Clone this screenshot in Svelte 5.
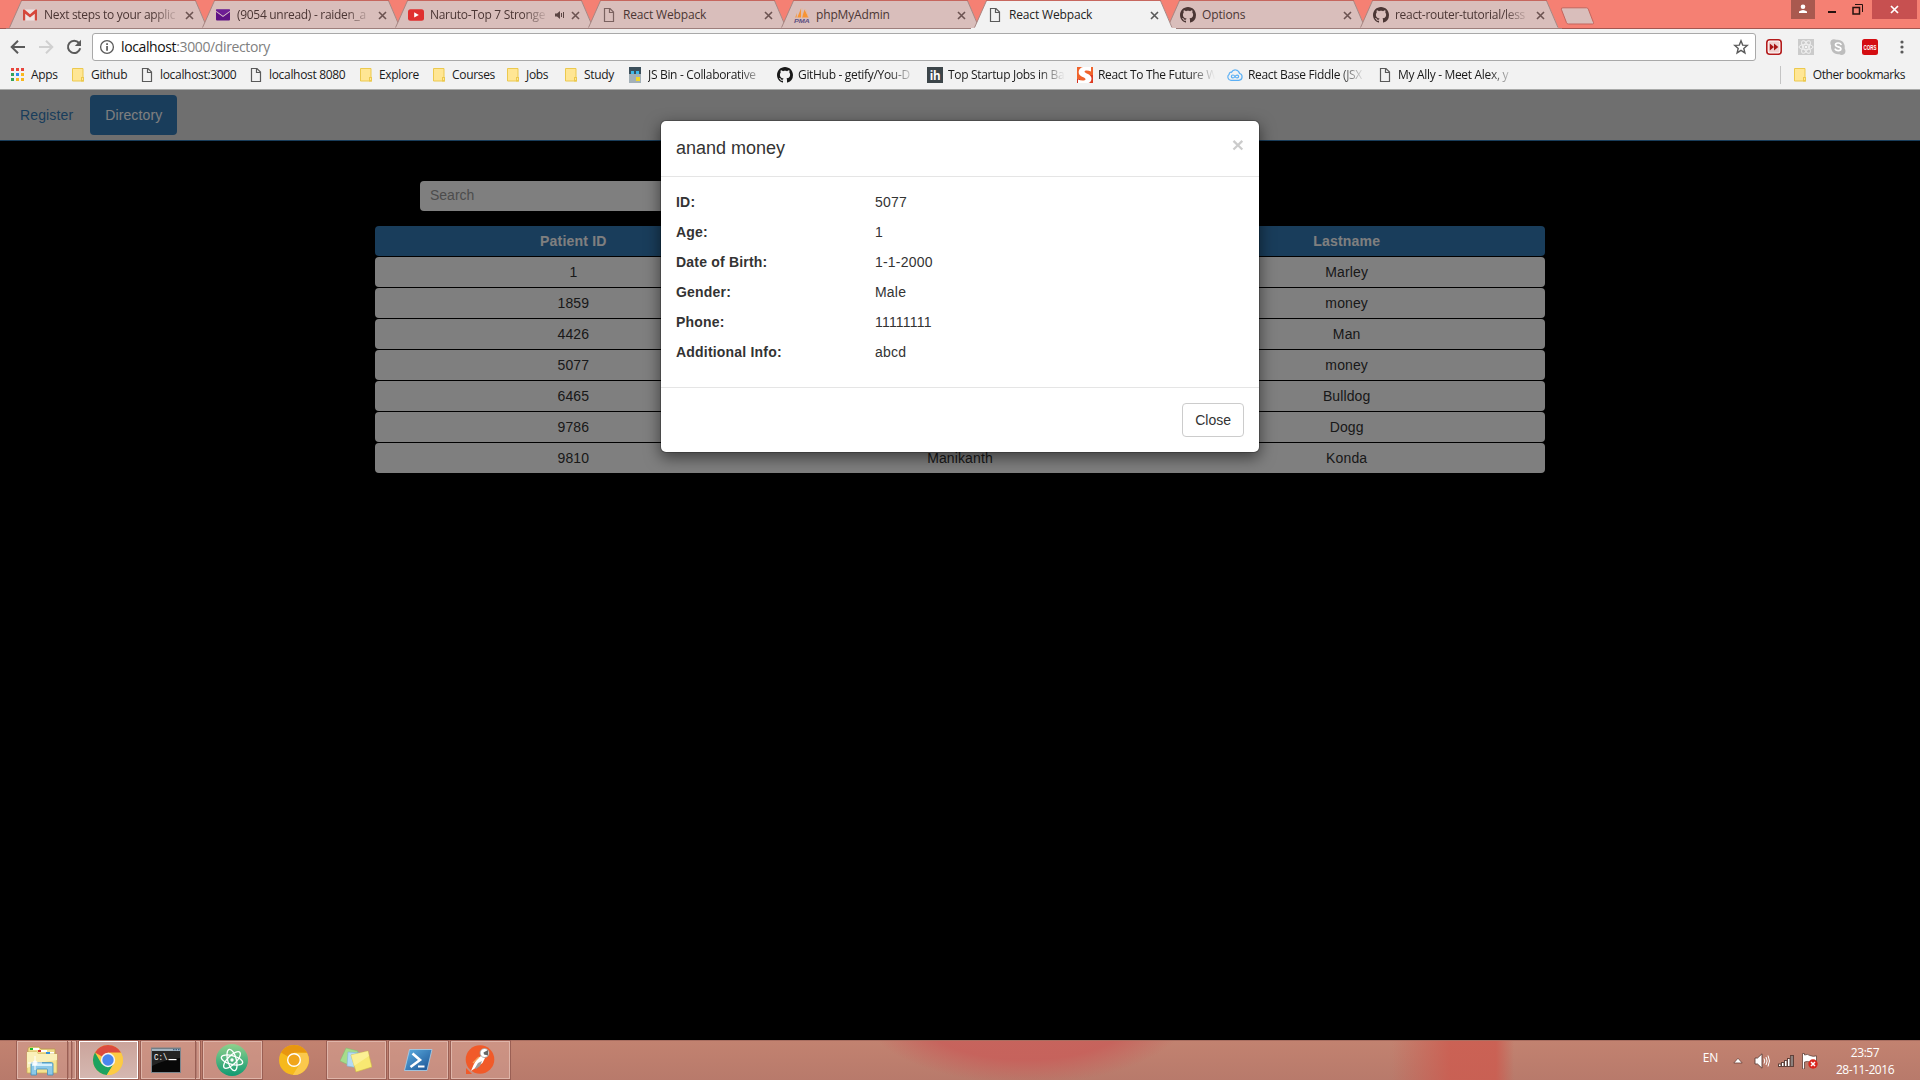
<script>
  const tabs = [
    { icon: 'gmail', title: 'Next steps to your applic', fade: true },
    { icon: 'ymail', title: '(9054 unread) - raiden_a', fade: true },
    { icon: 'youtube', title: 'Naruto-Top 7 Stronge', fade: true, audio: true },
    { icon: 'page', title: 'React Webpack' },
    { icon: 'pma', title: 'phpMyAdmin' },
    { icon: 'page', title: 'React Webpack', active: true },
    { icon: 'github', title: 'Options' },
    { icon: 'github', title: 'react-router-tutorial/less', fade: true },
  ];

  const bookmarks = [
    { icon: 'apps', title: 'Apps', w: 60 },
    { icon: 'folder', title: 'Github', w: 69 },
    { icon: 'page', title: 'localhost:3000', w: 109 },
    { icon: 'page', title: 'localhost 8080', w: 110 },
    { icon: 'folder', title: 'Explore', w: 73 },
    { icon: 'folder', title: 'Courses', w: 74 },
    { icon: 'folder', title: 'Jobs', w: 58 },
    { icon: 'folder', title: 'Study', w: 64 },
    { icon: 'jsbin', title: 'JS Bin - Collaborative', w: 150, fade: true },
    { icon: 'github', title: 'GitHub - getify/You-D', w: 150, fade: true },
    { icon: 'ih', title: 'Top Startup Jobs in Ba', w: 150, fade: true },
    { icon: 'sitepoint', title: 'React To The Future W', w: 150, fade: true },
    { icon: 'fiddle', title: 'React Base Fiddle (JSX', w: 150, fade: true },
    { icon: 'page', title: 'My Ally - Meet Alex, y', w: 150, fade: true },
  ];

  const patients = [
    { id: '1', first: '', last: 'Marley' },
    { id: '1859', first: '', last: 'money' },
    { id: '4426', first: '', last: 'Man' },
    { id: '5077', first: '', last: 'money' },
    { id: '6465', first: '', last: 'Bulldog' },
    { id: '9786', first: '', last: 'Dogg' },
    { id: '9810', first: 'Manikanth', last: 'Konda' },
  ];

  const details = [
    ['ID:', '5077'],
    ['Age:', '1'],
    ['Date of Birth:', '1-1-2000'],
    ['Gender:', 'Male'],
    ['Phone:', '11111111'],
    ['Additional Info:', 'abcd'],
  ];

  const tasks = [
    { icon: 'explorer', kind: 'stack3' },
    { icon: 'chrome', kind: 'current' },
    { icon: 'cmd', kind: 'stack2' },
    { icon: 'atom', kind: 'open' },
    { icon: 'canary', kind: 'pinned' },
    { icon: 'notes', kind: 'open' },
    { icon: 'powershell', kind: 'open' },
    { icon: 'postman', kind: 'open' },
  ];
</script>

{#snippet icon(name)}
  <svg class="ic {name}" viewBox="0 0 16 16" width="16" height="16">
    {#if name === 'gmail'}
      <path d="M1 2.5h14v11H1z" fill="#eee3e2" />
      <path d="M1 13.500V3.500L8 9l7-5.500v10h-2.200V6.800L8 10.600 3.200 6.800v6.700z" fill="#d14a3e" />
      <path d="M1 4.300V2.600h1.500L8 7.200l5.500-4.600H15v1.700L8 9.700z" fill="#d8463a" />
    {:else if name === 'ymail'}
      <rect x="1" y="2.500" width="14" height="11" rx="1" fill="#5f1285" />
      <path d="M1.300 4.200 8 9.300l6.700-5.100" fill="none" stroke="#dcc3c8" stroke-width="1.300" />
      <path d="M1 2.500h14v1.200L8 8.700 1 3.700z" fill="#6d1d94" />
    {:else if name === 'youtube'}
      <rect x="0" y="2.300" width="16" height="11.400" rx="2.500" fill="#e02f2f" />
      <path d="M6.200 5.300v5.200L10.800 8z" fill="#fff" />
    {:else if name === 'page'}
      <path d="M3.500 1.500h5.500l3.500 3.500v9.500h-9zM8.500 1.500v4h4" fill="none" stroke="currentColor" stroke-width="1.200" />
    {:else if name === 'pma'}
      <path d="M7 1.500 3.300 10.500H7zM10.500 2.500 8 10.500h6.500zM3 6l-1.800 4.500h1.300z" fill="#f79433" />
      <path d="M8 1v9.500M11.500 2l2.800 8" stroke="#f0b98c" stroke-width=".6" />
      <text x="0" y="15.700" textLength="15.500" lengthAdjust="spacingAndGlyphs" font-family="Liberation Sans" font-weight="bold" font-style="italic" font-size="6" fill="#5d5184">PMA</text>
    {:else if name === 'github'}
      <path fill="currentColor" d="M8 0C3.580 0 0 3.580 0 8c0 3.540 2.290 6.530 5.470 7.590.4.070.55-.17.55-.38 0-.19-.01-.82-.01-1.490-2.010.37-2.530-.49-2.690-.94-.09-.23-.48-.94-.82-1.130-.28-.15-.68-.52-.01-.53.63-.01 1.080.58 1.230.82.72 1.210 1.870.87 2.330.66.07-.52.28-.87.51-1.070-1.780-.2-3.640-.89-3.640-3.950 0-.87.31-1.590.82-2.150-.08-.2-.36-1.020.08-2.120 0 0 .67-.21 2.200.82.64-.18 1.320-.27 2-.27s1.360.09 2 .27c1.530-1.040 2.200-.82 2.200-.82.44 1.100.16 1.920.08 2.120.51.56.82 1.270.82 2.150 0 3.070-1.870 3.750-3.650 3.950.29.25.54.73.54 1.480 0 1.070-.01 1.930-.01 2.200 0 .21.15.46.55.38A8.010 8.010 0 0 0 16 8c0-4.420-3.580-8-8-8z" />
    {:else if name === 'apps'}
      <g>
        <path d="M1 1h3v3H1zM6 1h3v3H6zM11 1h3v3h-3z" fill="#e8453c" />
        <path d="M1 6h3v3H1zM1 11h3v3H1z" fill="#34a35a" />
        <path d="M6 6h3v3H6z" fill="#2d8cf0" />
        <path d="M11 6h3v3h-3zM6 11h3v3H6zM11 11h3v3h-3z" fill="#f9b81e" />
      </g>
    {:else if name === 'folder'}
      <path d="M2.500 1.500h10.500v9.500l.6 3h-11.100z" fill="#ffe694" stroke="#ecc94e" />
      <rect x="11.500" y="10.500" width="2" height="3.500" fill="#ffe694" stroke="#ecc94e" />
    {:else if name === 'jsbin'}
      <path d="M2 0h12v7H2z" fill="#3c4f5b" />
      <path d="M2 7h12v9H2z" fill="#a3b0b8" />
      <path d="M4 4h3v3H4zM9 4h3v3H9z" fill="#3fb8e8" />
      <path d="M9 10h4v4H9z" fill="#f2d72b" />
    {:else if name === 'ih'}
      <rect width="16" height="16" fill="#3c4549" />
      <text x="2.700" y="13" textLength="10.600" lengthAdjust="spacingAndGlyphs" font-family="Open Sans" font-weight="bold" font-size="13" fill="#fff">ih</text>
    {:else if name === 'sitepoint'}
      <rect width="16" height="16" fill="#f0632b" />
      <path d="M8 8h8v8H8z" fill="#dd3a22" />
      <path d="M0 12h3v4H0z" fill="#d8321f" />
      <path d="M14 0v4.500C11 3 7.500 3.300 7.500 4.600c0 2 7 2.400 7 6.900 0 2.500-1.500 4-3 4.500H1v-3.500c3 1.300 7.500 1.300 7.500-.3 0-2.200-6.800-2.400-6.800-6.700C1.700 2 4 .5 6 0z" fill="#fff" />
    {:else if name === 'fiddle'}
      <path d="M4 13.300a3.300 3.300 0 0 1-1.800-6C2 5.500 3.800 4.800 4.600 5.300 6 2 11.500 2 12.600 6.500c3.600 1 3.200 6.500-.7 6.800z" fill="none" stroke="#5cb0f5" stroke-width="1.200" />
      <path d="M8 9.500c-1.300-2.300-3.600-1.700-3.600 0s2.300 2.200 3.600 0 3.600-1.700 3.600 0-2.300 2.200-3.600 0z" fill="none" stroke="#5cb0f5" stroke-width="1.200" />
    {:else if name === 'forward'}
      <rect x=".8" y=".8" width="14.400" height="14.400" rx="3" fill="#fff" stroke="#b31b1b" stroke-width="1.600" />
      <rect x="2.500" y="2.500" width="11" height="11" rx="1" fill="#efd2d0" />
      <path d="M3.800 4.500v7L8 8zM8 4.500v7L12.300 8z" fill="#a81414" />
    {:else if name === 'react'}
      <rect width="16" height="16" fill="#cbcbcb" />
      <g fill="none" stroke="#f0f0f0" stroke-width="1">
        <ellipse cx="8" cy="8" rx="7" ry="2.700" />
        <ellipse cx="8" cy="8" rx="7" ry="2.700" transform="rotate(60 8 8)" />
        <ellipse cx="8" cy="8" rx="7" ry="2.700" transform="rotate(120 8 8)" />
      </g>
      <circle cx="8" cy="8" r="1.300" fill="#f5f5f5" />
    {:else if name === 'skype'}
      <path d="M1.200 1.200C2.500-.2 5-.1 6.200.8c5.500-.8 9.300 3.500 8.500 8.600 1.200 2 1 4.300-.4 5.500-1.500 1.300-3.600 1.300-5 .3C4.200 16 .3 11.800 1.100 6.600 0 4.800.1 2.500 1.200 1.200z" fill="#bdbdbd" />
      <path d="M11 5.300C10 3.500 5.500 3.500 5.500 5.800c0 2.700 5.400 1.300 5.400 4 0 2.400-4.600 2.500-5.700.4" fill="none" stroke="#fff" stroke-width="1.700" stroke-linecap="round" />
    {:else if name === 'cors'}
      <rect width="16" height="16" rx="2.500" fill="#d40d12" />
      <text x="1.500" y="10.700" textLength="13" lengthAdjust="spacingAndGlyphs" font-family="Liberation Sans" font-weight="bold" font-size="7.500" fill="#fff">CORS</text>
    {/if}
  </svg>
{/snippet}

{#snippet cross()}
  <svg class="cross" viewBox="0 0 9 9" width="9" height="9"><path d="M1 1l7 7M8 1L1 8" /></svg>
{/snippet}

{#snippet task(name)}
  <svg class="task-icon" viewBox="0 0 32 32" width="32" height="32">
    {#if name === 'explorer'}
      <path d="M2 5q0-2 2-2h9l2 2h14v6H2z" fill="#f0dd8c" stroke="#b99c45" stroke-width=".7" />
      <path d="M4 4h3v2H4z" fill="#1bbf2c" /><path d="M12 6h3v2h-3z" fill="#d0392c" /><path d="M20 8h4v2h-4z" fill="#2e8fe0" />
      <path d="M7 4h6v2H7zM15 6h6v2h-6zM24 8h4v2h-4z" fill="#fff" />
      <path d="M1 8h10l1 2h19v19H1z" fill="#f5e390" stroke="#c7a950" stroke-width=".7" />
      <path d="M1 8h10l1 2h19v6q-15 1-30 8z" fill="#faf0b9" />
      <path d="M20 8h4v1.700h-4z" fill="#2e8fe0" />
      <path d="M5 31V20q0-1.500 1.500-1.500h19Q27 18.500 27 20v11h-5.500v-5q0-1-1-1h-9q-1 0-1 1v5z" fill="#8cc9e8" stroke="#4390bd" stroke-width=".8" />
      <path d="M6 20h20v2H6z" fill="#d5f0fb" />
      <path d="M9 12v14M2 19h14" stroke="#fff" stroke-width="1" /><circle cx="9" cy="19" r="2.500" fill="#fff" opacity=".8" />
    {:else if name === 'chrome'}
      <circle cx="16" cy="16" r="15" fill="#fbc93c" />
      <path d="M16 16 3 8.500A15 15 0 0 1 29 8.500H16z" fill="#dc4b3e" />
      <path d="M3 8.500A15 15 0 0 0 14.800 31L22 19.600 16 16 9.500 19.700z" fill="#1da260" />
      <path d="M16 9h13a15 15 0 0 1-14.200 22L22 19.600z" fill="#fccb45" />
      <circle cx="16" cy="16" r="7.200" fill="#f4f4f4" /><circle cx="16" cy="16" r="5.700" fill="#4a86ee" />
    {:else if name === 'canary'}
      <circle cx="16" cy="16" r="15" fill="#f6b91c" />
      <path d="M16 16 3 8.500A15 15 0 0 1 29 8.500H16z" fill="#e8960f" />
      <path d="M16 9h13a15 15 0 0 1-14.200 22L22 19.600z" fill="#fbc84c" />
      <circle cx="16" cy="16" r="7" fill="#fff" /><circle cx="16" cy="16" r="5.600" fill="#f0a51b" />
    {:else if name === 'cmd'}
      <rect x="1.500" y="4" width="29" height="24.500" fill="#080808" stroke="#7b858c" />
      <path d="M2 4.500h28v2.500H2z" fill="#a3b4c0" />
      <path d="M2 7h28v7Q16 15 2 22z" fill="#242424" />
      <path d="M23 5h1.500v1.200H23zM25.500 5h1.500v1.200h-1.500zM28 5h1.500v1.200H28z" fill="#3a5d80" />
      <text x="4" y="16" textLength="13.500" lengthAdjust="spacingAndGlyphs" font-family="Liberation Mono" font-size="9" fill="#fff">C:\</text>
      <path d="M18.500 15h8v1.200h-8z" fill="#fff" />
    {:else if name === 'atom'}
      <defs><linearGradient id="atomFill" x1="0" y1="0" x2="0" y2="1"><stop offset="0" stop-color="#8fd08c" /><stop offset="1" stop-color="#119a72" /></linearGradient></defs>
      <circle cx="16" cy="16" r="16" fill="url(#atomFill)" />
      <g fill="none" stroke="#fff" stroke-width="1.300">
        <ellipse cx="16" cy="16" rx="11" ry="4.300" transform="rotate(15 16 16)" />
        <ellipse cx="16" cy="16" rx="11" ry="4.300" transform="rotate(75 16 16)" />
        <ellipse cx="16" cy="16" rx="11" ry="4.300" transform="rotate(135 16 16)" />
      </g>
      <circle cx="16" cy="16" r="1.700" fill="#fff" />
    {:else if name === 'notes'}
      <path d="M6 4 18 7 13 23 0 17z" fill="#a6dc8c" stroke="#86bb70" stroke-width=".6" />
      <path d="M8 8 21 9 19 24 7 22z" fill="#b2daf5" stroke="#83b4d8" stroke-width=".6" />
      <path d="M11 11 28 7l4 16-16 5z" fill="#f8e872" stroke="#cbb545" stroke-width=".6" />
      <path d="M11 11 28 7l1 5-15 10z" fill="#fdf3a2" opacity=".7" />
    {:else if name === 'powershell'}
      <defs><linearGradient id="psFill" x1="0" y1="0" x2="1" y2="1"><stop offset="0" stop-color="#5fb0e2" /><stop offset="1" stop-color="#174f92" /></linearGradient></defs>
      <path d="M7.500 5.500H30L25 26.500H2.500z" fill="url(#psFill)" stroke="#a9d2ec" stroke-width=".8" />
      <path d="M10.500 9.500l7.500 6.500-9.500 7" fill="none" stroke="#fff" stroke-width="2.600" />
      <path d="M16 22.500h6.500" stroke="#fff" stroke-width="2" />
    {:else if name === 'postman'}
      <circle cx="16" cy="15.500" r="14.300" fill="#f15a29" />
      <path d="M2 24v6h6z" fill="#f15a29" />
      <path d="M7 27l2.500-6L13 14.500l5-3 3 2.500-2.500 5-5 3.500z" fill="#fff" />
      <path d="M11 24l3-5 4-2-2 5-4 3z" fill="#9a9a9a" />
      <circle cx="20.500" cy="9" r="4.500" fill="#fff" stroke="#999" stroke-width=".8" />
      <path d="M19.500 8.500l4.500-2.500v5.500l-4-1z" fill="#666" />
      <path d="M9 19l6-6" stroke="#f5a35c" stroke-width="1.500" />
    {/if}
  </svg>
{/snippet}

<div class="screen">
  <header class="chrome">
    <div class="tabstrip">
      <div class="tabs">
        {#each tabs as tab}
          <div class="tab" class:active={tab.active}>
            <svg class="tab-shape" viewBox="0 0 205 29" width="205" height="29">
              <path class="fill" d="M0 29 L12.500 .5 H192.500 L205 29z" />
              <path class="side" d="M0 28.500 L12.500 .5 M192.500 .5 L204.500 28.500" />
              <path class="top" d="M12 .5 H193" />
            </svg>
            <div class="tab-body">
              {@render icon(tab.icon)}
              <span class="tab-title" class:fade={tab.fade}>{tab.title}</span>
              {#if tab.audio}
                <svg class="audio" viewBox="0 0 10 8" width="10" height="8"><path d="M0 2.500h2L5 0v8L2 5.500H0z" fill="#5b4543" /><path d="M6.500 2v4M8.500 1v6" stroke="#5b4543" /></svg>
              {/if}
              {@render cross()}
            </div>
          </div>
        {/each}
      </div>
      <svg class="newtab" viewBox="0 0 36 19" width="36" height="19"><path d="M4 .8h23.500q1.200 0 1.800 1.300l5.200 13.500q.4 1.400-1 1.400H9.500q-1.500 0-2-1.300L2.300 2.200Q2 .8 4 .8z" fill="#d9bebb" stroke="#c4655d" /></svg>
      <div class="window-controls">
        <span class="profile"><svg viewBox="0 0 10 10" width="10" height="10"><circle cx="5" cy="2.800" r="2.300" fill="#fff" /><path d="M1 9V7.500Q3 6 5 6t4 1.500V9z" fill="#fff" /></svg></span>
        <span class="minimize"></span>
        <svg class="restore" viewBox="0 0 11 11" width="11" height="11"><path d="M1 3.500h6.500v6.500H1z" fill="none" stroke="#26120f" stroke-width="1.500" /><path d="M3 .5h7.500V8" fill="none" stroke="#26120f" /></svg>
        <span class="close-window"><svg viewBox="0 0 9 9" width="9" height="9"><path d="M1 1l7 7M8 1L1 8" stroke="#fff" stroke-width="1.700" /></svg></span>
      </div>
    </div>

    <div class="toolbar">
      <svg class="nav-icon" viewBox="0 0 16 16" width="16" height="16"><path d="M15 8H2M8 1.700 1.700 8 8 14.300" fill="none" stroke="#5a5a5a" stroke-width="2" /></svg>
      <svg class="nav-icon" viewBox="0 0 16 16" width="16" height="16"><path d="M1 8h13M8 1.700 14.300 8 8 14.300" fill="none" stroke="#d0d0d0" stroke-width="2" /></svg>
      <svg class="nav-icon" viewBox="0 0 16 16" width="16" height="16"><path d="M13 4A6.200 6.200 0 1 0 14.200 9.300" fill="none" stroke="#5a5a5a" stroke-width="2" /><path d="M15 .8v6.200H8.800z" fill="#5a5a5a" /></svg>
      <div class="omnibox">
        <svg viewBox="0 0 16 16" width="16" height="16"><circle cx="8" cy="8" r="6.400" fill="none" stroke="#5a5a5a" stroke-width="1.300" /><path d="M7.200 4.200h1.700v1.700H7.200zM7.200 7h1.700v4.800H7.200z" fill="#5a5a5a" /></svg>
        <span class="url"><b>localhost</b>:3000/directory</span>
        <svg viewBox="0 0 16 16" width="16" height="16"><path d="M8 1.800l1.700 4.300 4.600.3-3.500 3 1.100 4.500L8 11.400l-3.900 2.500 1.100-4.500-3.500-3 4.600-.3z" fill="none" stroke="#5a5a5a" stroke-width="1.400" /></svg>
      </div>
      <div class="extensions">
        {@render icon('forward')}
        {@render icon('react')}
        {@render icon('skype')}
        {@render icon('cors')}
      </div>
      <svg class="menu" viewBox="0 0 4 14" width="4" height="14"><circle cx="2" cy="2" r="1.600" /><circle cx="2" cy="7" r="1.600" /><circle cx="2" cy="12" r="1.600" /></svg>
    </div>

    <div class="bookmarks">
      {#each bookmarks as mark}
        <div class="bookmark" style:width="{mark.w}px">
          {@render icon(mark.icon)}
          <span class:fade={mark.fade}>{mark.title}</span>
        </div>
      {/each}
      <div class="bookmark other">
        {@render icon('folder')}
        <span>Other bookmarks</span>
      </div>
    </div>
  </header>

  <main class="page">
    <nav class="pills">
      <a class="pill">Register</a>
      <a class="pill selected">Directory</a>
    </nav>
    <section class="directory">
      <div class="search">Search</div>
      <div class="row head"><span>Patient ID</span><span></span><span>Lastname</span></div>
      {#each patients as p}
        <div class="row"><span>{p.id}</span><span>{p.first}</span><span>{p.last}</span></div>
      {/each}
    </section>

    <div class="backdrop"></div>
    <div class="modal">
      <div class="modal-header">
        <h4>anand money</h4>
        <span class="dismiss">×</span>
      </div>
      <div class="modal-body">
        {#each details as [label, value]}
          <div class="detail"><strong>{label}</strong><span>{value}</span></div>
        {/each}
      </div>
      <div class="modal-footer"><button>Close</button></div>
    </div>
  </main>

  <footer class="taskbar">
    <div class="tasks">
      {#each tasks as t}
        <div class="task {t.kind}">
          <div class="face">{@render task(t.icon)}</div>
          {#if t.kind === 'stack3' || t.kind === 'stack2'}<i></i>{/if}
          {#if t.kind === 'stack3'}<i></i>{/if}
        </div>
      {/each}
    </div>
    <div class="tray">
      <span class="lang">EN</span>
      <svg class="up" viewBox="0 0 10 7" width="10" height="7"><path d="M.8 6 5 1.200 9.200 6z" fill="#fff" stroke="#6c433a" stroke-width=".8" /></svg>
      <svg class="tray-icon" viewBox="0 0 16 16" width="16" height="16"><path d="M1 5h2.500L8 .8v14.400L3.500 11H1z" fill="#fff" stroke="#5f4039" stroke-width=".9" /><path d="M10 5.500q1.500 2.500 0 5M12 4q2.300 4 0 8M14 2.500q3 5.500 0 11" fill="none" stroke="#fff" stroke-width="1" /></svg>
      <svg class="tray-icon" viewBox="0 0 16 16" width="16" height="16"><path d="M0 14v-3.500h3V9h3V7h3V5h3V2h4v12z" fill="#5f4039" /><path d="M1 11.500h1.500V13H1zM4 10h1.500v3H4zM7 8h1.500v5H7zM10 6h1.500v7H10z" fill="#fff" /><path d="M12.800 3H15v10h-2.200z" fill="#8b807d" /></svg>
      <svg class="tray-icon" viewBox="0 0 16 16" width="16" height="16"><path d="M.5.5h2V2q3-1.500 5.500.5 3 1.500 6.500.3v7q-3 1-6-.5-3-1.500-6-.3v7h-2z" fill="#fff" stroke="#5f4039" stroke-width=".8" /><circle cx="11" cy="11" r="4.700" fill="#d9261c" /><path d="M9 9l4 4M13 9l-4 4" stroke="#fff" stroke-width="1.500" /></svg>
      <div class="clock"><span>23:57</span><span>28-11-2016</span></div>
    </div>
  </footer>
</div>

<style>
  :global(body) { overflow: hidden; background: #000; }
  .screen, .screen :global(*) { box-sizing: border-box; }
  .screen {
    width: 1920px; height: 1080px; display: flex; flex-direction: column;
    font: 14px/20px "Liberation Sans", Arial, sans-serif; color: #333;
  }
  svg { display: block; flex: none; }
  .ic { overflow: visible; }

  /* browser frame */
  .chrome { height: 90px; flex: none; background: #f2f2f2; border-bottom: 1px solid #a9aaa9; font-family: "Open Sans", "Noto Sans", sans-serif; }
  .tabstrip { height: 29px; display: flex; align-items: flex-start; background: #f58073; box-shadow: inset 0 -1px #a25650; }
  .tabs { display: flex; padding-left: 6px; }
  .tab { display: grid; grid-template-columns: 205px; width: 205px; height: 29px; margin-right: -12px; color: #4b3634; }
  .tab-shape, .tab-body { grid-area: 1 / 1; }
  .tab .fill { fill: #d9bebb; }
  .tab .side { fill: none; stroke: #a58683; }
  .tab .top { stroke: #c4625a; }
  .tab .page { color: #7b6260; }
  .tab-shape { border-bottom: 1px solid #9d7f7c; }
  .active { z-index: 1; color: #222; }
  .active .fill { fill: #f2f2f2; }
  .active .tab-shape { border-bottom-color: #f2f2f2; }
  .tab.active .page { color: #5a5a5a; }
  .tab-body { display: flex; align-items: center; min-width: 0; padding: 1px 17.500px 0 16px; font-size: 12px; line-height: 16px; letter-spacing: -.15px; }
  .tab-body .ic, .bookmark .ic { flex: none; }
  .tab-title { flex: 1; min-width: 0; margin: 0 6px 0 6px; overflow: hidden; white-space: nowrap; }
  .fade { -webkit-mask-image: linear-gradient(to right, #000 calc(100% - 26px), transparent); mask-image: linear-gradient(to right, #000 calc(100% - 26px), transparent); }
  .tab-title.fade { letter-spacing: -.3px; }
  .audio { margin: 0 6px 0 0; }
  .cross path { fill: none; stroke: #6c5351; stroke-width: 1.600; }
  .active .cross path { stroke: #5a5a5a; }
  .newtab { margin: 7px 0 0 9px; }
  .window-controls { display: flex; margin-left: auto; padding-right: 3px; }
  .profile, .close-window { display: flex; justify-content: center; align-items: center; height: 19px; }
  .profile { width: 24px; background: #a9594f; }
  .profile svg { margin-top: -2px; }
  .minimize { width: 8px; height: 2px; margin: 11px 15px 0 13px; background: #26120f; }
  .restore { margin: 4px 9px 0 1px; }
  .close-window { width: 45px; background: #c75050; }

  .toolbar { height: 36px; display: flex; align-items: center; padding: 0 16px 0 10px; }
  .nav-icon { margin-right: 12px; }
  .omnibox { width: 1664px; height: 28px; margin-left: -2px; display: flex; align-items: center; padding: 0 6px 0 6px; background: #fff; border: 1px solid #a9a9a9; border-radius: 3px; }
  .url { flex: 1; margin-left: 6px; font-size: 14px; color: #808080; letter-spacing: -.38px; }
  .url b { font-weight: normal; color: #111; }
  .extensions { display: flex; gap: 16px; margin-left: 10px; }
  .menu { margin-left: auto; fill: #5a5a5a; }

  .bookmarks { height: 24px; display: flex; align-items: center; padding: 0 15px 4px 10px; font-size: 12px; line-height: 18px; letter-spacing: -.32px; color: #1a1a1a; }
  .bookmark { display: flex; align-items: center; gap: 5px; flex: none; white-space: nowrap; }
  .bookmark .ic { color: #5a5a5a; }
  .bookmark .github { color: #1a1a1a; }
  .bookmark .fade { width: 117px; overflow: hidden; }
  .other { margin-left: auto; padding-left: 11px; border-left: 1px solid #c4c4c4; letter-spacing: -.42px; }

  /* application page */
  main.page { position: relative; height: 950px; flex: none; background: #000; }
  .pills { height: 51px; display: flex; gap: 2px; padding: 5px; background: #dfdfdf; border-bottom: 1px solid #337ab7; }
  .pill { height: 40px; padding: 10px 15px; border-radius: 4px; color: #337ab7; letter-spacing: .13px; }
  .selected { background: #337ab7; color: #fff; }
  .directory { width: 1170px; margin: 0 auto; padding-top: 40px; }
  .search { width: 400px; height: 30px; margin: 0 0 15px 45px; padding: 4px 10px; background: #fff; border-radius: 4px; color: #999; }
  .row { height: 30px; margin-bottom: 1px; padding: 5px; display: grid; grid-template-columns: repeat(3, 1fr); text-align: center; background: #fff; border-radius: 4px; letter-spacing: .12px; }
  .head { background: #337ab7; color: #fff; font-weight: bold; letter-spacing: .2px; }

  .backdrop { position: absolute; inset: 0; background: rgba(0, 0, 0, .5); }
  .modal { position: absolute; left: 660px; top: 30px; width: 600px; background: #fff; background-clip: padding-box; border: 1px solid rgba(0, 0, 0, .2); border-radius: 6px; box-shadow: 0 5px 15px rgba(0, 0, 0, .5); }
  .modal-header { height: 56px; padding: 15px; display: flex; justify-content: space-between; border-bottom: 1px solid #e5e5e5; }
  h4 { margin: 0; font-size: 18px; line-height: 25px; font-weight: normal; }
  .dismiss { margin-top: -2px; font-size: 21px; line-height: 21px; font-weight: bold; color: #000; opacity: .2; }
  .modal-body { padding: 15px; }
  .detail { display: grid; grid-template-columns: 199px 1fr; margin-bottom: 10px; letter-spacing: .2px; }
  .modal-footer { padding: 15px; display: flex; justify-content: flex-end; border-top: 1px solid #e5e5e5; }
  button { height: 34px; padding: 6px 12px; font: inherit; color: #333; background: #fff; border: 1px solid #ccc; border-radius: 4px; }

  /* desktop taskbar */
  .taskbar {
    height: 40px; display: flex; justify-content: space-between; border-top: 1px solid #a86d60;
    background:
      radial-gradient(ellipse 165px 75px at 1026px -32px, rgba(200, 92, 88, .8) 68%, rgba(200, 92, 88, 0)),
      linear-gradient(to right, transparent 1392px, rgba(205, 90, 78, .8) 1450px 1496px, transparent 1514px),
      linear-gradient(#c28270, #b87a6b);
  }
  .tasks { display: flex; padding: 0 0 1px 17px; }
  .task { display: flex; width: 59px; margin-right: 3px; }
  .face { flex: 1; display: flex; align-items: center; justify-content: center; }
  .task-icon { margin-left: -2px; }
  .stack2 .task-icon { margin-left: -5px; }
  .open .face, .stack2 .face, .stack3 .face, .task i { border: 1px solid #dfb5a9; background: rgba(225, 180, 170, .35); box-shadow: 0 0 0 1px #9a5f54; }
  .current .face { border: 1px solid #fff; background: linear-gradient(#cba49b, #d5b8b1); box-shadow: 0 0 0 1px #9a5f54; }
  .task i { width: 4px; border-left: 0; }
  .tray { display: flex; align-items: center; color: #fff; font: 12px/17px "Open Sans", "Noto Sans", sans-serif; }
  .lang { margin: -7px 15px 0 0; letter-spacing: -.2px; }
  .up { margin-right: 11px; }
  .tray-icon { margin-right: 8px; }
  .clock { width: 78px; margin-right: 16px; display: flex; flex-direction: column; align-items: center; letter-spacing: -.45px; }
</style>
